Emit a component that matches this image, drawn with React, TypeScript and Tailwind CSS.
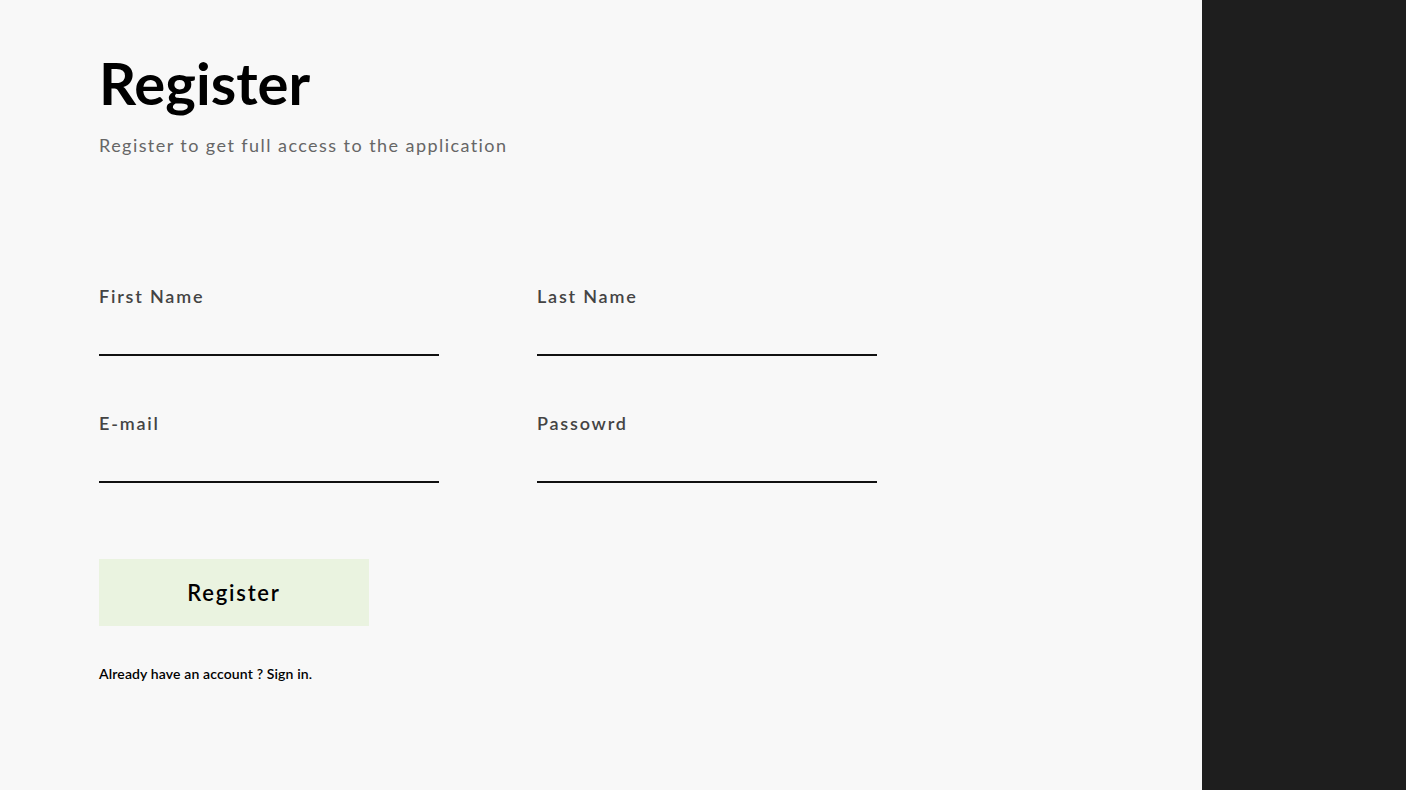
import { useState } from "react";

type FieldProps = {
  label: string;
  type?: string;
};

function Field({ label, type = "text" }: FieldProps) {
  const [value, setValue] = useState("");
  return (
    <label className="flex flex-col w-[340px]">
      <span className="text-[18px] leading-[22px] font-semibold tracking-[0.1em] text-[#444]">
        {label}
      </span>
      <input
        type={type}
        value={value}
        onChange={(e) => setValue(e.target.value)}
        className="h-[49px] bg-transparent border-b-2 border-[#111] outline-none text-[16px]"
      />
    </label>
  );
}

export default function App() {
  return (
    <div
      className="flex h-[790px] w-full bg-[#f8f8f8]"
      style={{ fontFamily: "Lato, 'Noto Sans', sans-serif" }}
    >
      <main className="flex-1 flex flex-col pl-[99px] pt-[50px]">
        <h1 className="text-[58px] leading-[66px] font-bold text-black">Register</h1>
        <p className="mt-[18px] text-[18px] leading-[22px] tracking-[0.08em] text-[#666]">
          Register to get full access to the application
        </p>

        <form className="mt-[129px] grid grid-cols-[340px_340px] gap-x-[98px] gap-y-[56px]">
          <Field label="First Name" />
          <Field label="Last Name" />
          <Field label="E-mail" type="email" />
          <Field label="Passowrd" type="password" />
        </form>

        <button className="mt-[76px] w-[270px] h-[67px] bg-[#eaf3e0] text-[22px] font-semibold tracking-[0.08em] text-black">
          Register
        </button>

        <p className="mt-[37px] text-[14px] font-semibold tracking-[0.01em] text-black">
          Already have an account ? Sign in.
        </p>
      </main>
      <aside className="w-[204px] h-full bg-[#1e1e1e]" />
    </div>
  );
}
